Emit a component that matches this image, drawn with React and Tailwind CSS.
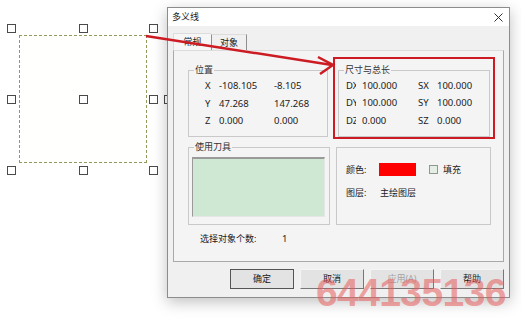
import React from 'react';

const handles = [
  'left-[7px] top-[24px]', 'left-[79px] top-[24px]', 'left-[149px] top-[24px]',
  'left-[7px] top-[95px]', 'left-[79px] top-[95px]', 'left-[149px] top-[95px]',
  'left-[7px] top-[166px]', 'left-[79px] top-[166px]', 'left-[149px] top-[166px]',
  'left-[164px] top-[95px]',
];

function Group({ label, className, children }) {
  return (
    <fieldset className={`border border-[#c9c9c9] ${className}`}>
      <legend className="ml-[5px] px-[1px] text-[9px] leading-[12px] text-[#333]">{label}</legend>
      {children}
    </fieldset>
  );
}

function Row({ cols, children }) {
  return <div className={`grid ${cols} h-[17.5px] items-center`}>{children}</div>;
}

function Btn({ children, primary, disabled }) {
  return (
    <div
      className={
        'w-[64px] h-[20px] flex items-center justify-center text-[9px] bg-[#e3e3e3] ' +
        (primary
          ? 'border border-[#555]'
          : 'border border-t-[#f4f4f4] border-l-[#f4f4f4] border-r-[#777] border-b-[#777]') +
        (disabled ? ' text-[#a3a3a3]' : ' text-[#1a1a1a]')
      }
    >
      {children}
    </div>
  );
}

export default function App() {
  return (
    <div className="relative w-[521px] h-[323px] bg-white overflow-hidden font-['Noto_Sans','Noto_Sans_CJK_SC',sans-serif] text-[#1a1a1a]">
      {/* selected object on the canvas */}
      <div className="absolute left-[19px] top-[35px] w-[128px] h-[128px] border border-dashed border-[#8f9a5c] bg-[#fffffd]" />
      {handles.map((h, i) => (
        <div key={i} className={`absolute ${h} w-[9px] h-[9px] border-[1.5px] border-[#4a4a4a] bg-white`} />
      ))}

      {/* dialog window */}
      <div className="absolute left-[167px] top-[7px] w-[343px] h-[291px] border border-[#8c8c8c] bg-[#f0f0f0] shadow-[0_4px_14px_rgba(0,0,0,0.25)] flex flex-col">
        <div className="h-[18px] bg-white flex items-center justify-between pl-[4px] pr-[6px]">
          <span className="text-[9px] leading-[12px]">多义线</span>
          <svg width="9" height="9" viewBox="0 0 9 9">
            <path d="M0.5 0.5L8.5 8.5M8.5 0.5L0.5 8.5" stroke="#333" strokeWidth="1" />
          </svg>
        </div>

        <div className="flex-1 px-[5px] pt-[7px] flex flex-col">
          {/* tabs */}
          <div className="flex h-[17px] items-end text-[9px]">
            <div className="w-[38px] h-[17px] bg-[#f6f6f6] border-t border-l border-[#dcdcdc] flex items-center justify-center">常规</div>
            <div className="w-[36px] h-[16px] border-l border-r border-t border-l-[#8f8f8f] border-r-[#8f8f8f] border-t-[#dcdcdc] flex items-center justify-center">对象</div>
          </div>

          {/* tab panel */}
          <div className="h-[212px] bg-[#f4f4f4] border border-[#a9a9a9] border-t-[#dcdcdc] flex flex-col">
            <div className="flex ml-[14px] mt-[13px]">
              <Group label="位置" className="w-[140px] h-[73px]">
                <div className="pl-[16px] pt-[1.5px] text-[9.5px]">
                  <Row cols="grid-cols-[14px_55px_auto]"><span>X</span><span>-108.105</span><span>-8.105</span></Row>
                  <Row cols="grid-cols-[14px_55px_auto]"><span>Y</span><span>47.268</span><span>147.268</span></Row>
                  <Row cols="grid-cols-[14px_55px_auto]"><span>Z</span><span>0.000</span><span>0.000</span></Row>
                </div>
              </Group>
              <Group label="尺寸与总长" className="ml-[10px] w-[152px] h-[73px]">
                <div className="pl-[7px] pt-[1px] text-[9.5px]">
                  <Row cols="grid-cols-[16px_56px_19px_auto]"><span className="w-[10px] overflow-hidden whitespace-nowrap">DX</span><span>100.000</span><span>SX</span><span>100.000</span></Row>
                  <Row cols="grid-cols-[16px_56px_19px_auto]"><span className="w-[10px] overflow-hidden whitespace-nowrap">DY</span><span>100.000</span><span>SY</span><span>100.000</span></Row>
                  <Row cols="grid-cols-[16px_56px_19px_auto]"><span className="w-[10px] overflow-hidden whitespace-nowrap">DZ</span><span>0.000</span><span>SZ</span><span>0.000</span></Row>
                </div>
              </Group>
            </div>

            <div className="flex items-end ml-[14px] mt-[4px]">
              <Group label="使用刀具" className="w-[142px] h-[84px]">
                <div className="ml-[3px] mt-[4px] w-[133px] h-[60px] bg-[#cfe8d4] border-t-2 border-l border-[#9a9a9a] border-r border-b border-r-[#e6e6e6] border-b-[#e6e6e6]" />
              </Group>
              <div className="ml-[6px] w-[155px] h-[78px] border border-[#c9c9c9] pl-[9px] pt-[15px] text-[9px]">
                <div className="flex items-center h-[13px]">
                  <span className="w-[33px]">颜色:</span>
                  <div className="w-[37px] h-[13px] bg-[#ff0000]" />
                  <div className="ml-[13px] w-[9px] h-[9px] border border-[#8d9a8d] bg-[#e4eee4]" />
                  <span className="ml-[5px]">填充</span>
                </div>
                <div className="flex items-center h-[13px] mt-[10px]">
                  <span className="w-[34px]">图层:</span>
                  <span>主绘图层</span>
                </div>
              </div>
            </div>

            <div className="flex items-center h-[12px] mt-[8px] pl-[26px] text-[9px]">
              <span className="w-[82px]">选择对象个数:</span>
              <span className="text-[9.5px]">1</span>
            </div>
          </div>

          {/* buttons */}
          <div className="flex justify-end gap-[6px] mt-[7px] ml-[56px]">
            <Btn primary>确定</Btn>
            <Btn>取消</Btn>
            <Btn disabled>应用(A)</Btn>
            <Btn>帮助</Btn>
          </div>
        </div>
      </div>

      {/* annotation: red frame and arrow */}
      <div className="absolute left-[333px] top-[57px] w-[162px] h-[82px] border-[2.5px] border-[#cc1b22]" />
      <svg className="absolute left-0 top-0" width="521" height="323" viewBox="0 0 521 323">
        <path d="M146 36L332 65" stroke="#cc1b22" strokeWidth="2.5" fill="none" />
        <path d="M318 57L333 65L320 74" stroke="#cc1b22" strokeWidth="2.5" fill="none" strokeLinejoin="miter" />
      </svg>

      {/* watermark */}
      <div className="absolute left-[316px] top-[273px] text-[39px] leading-none font-bold font-['Liberation_Sans',sans-serif] tracking-[-0.6px] text-[#e85a5a]/55 select-none">
        644135136
      </div>
    </div>
  );
}
